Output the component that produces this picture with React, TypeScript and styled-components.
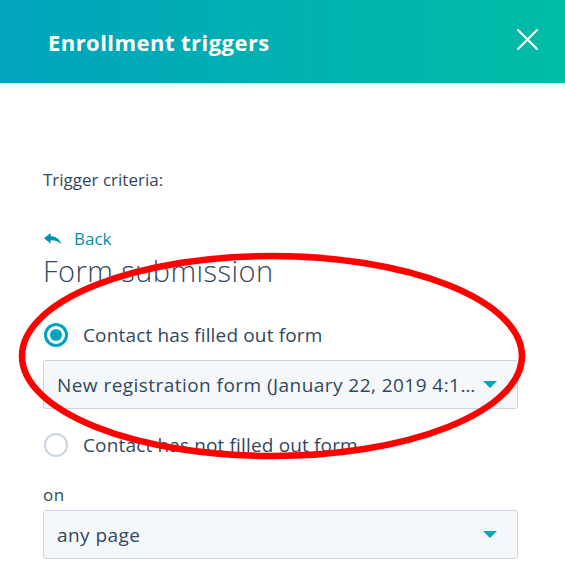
import { createGlobalStyle } from "styled-components"
import styled from "styled-components"

const GlobalStyle = createGlobalStyle`
  html, body {
    margin: 0;
    padding: 0;
    background: #ffffff;
  }
  body {
    font-family: "Open Sans", Lato, sans-serif;
    color: #33475b;
  }
`

const Panel = styled.div`
  position: relative;
  width: 565px;
  height: 588px;
  overflow: hidden;
  background: #ffffff;
`

const Header = styled.header`
  display: flex;
  align-items: center;
  justify-content: space-between;
  height: 83px;
  padding: 0 27px 0 48px;
  box-sizing: border-box;
  background: linear-gradient(90deg, #00a4bd 0%, #00bda5 100%);
`

const Title = styled.h2`
  margin: 0;
  font-size: 22px;
  font-weight: 700;
  letter-spacing: 0.45px;
  color: #ffffff;
`

const CloseButton = styled.button`
  display: flex;
  align-items: center;
  justify-content: center;
  width: 22px;
  height: 22px;
  padding: 0;
  margin-top: -4px;
  border: none;
  background: none;
  cursor: pointer;
`

const Body = styled.div`
  display: flex;
  flex-direction: column;
  padding: 85px 47px 0 43px;
`

const CriteriaLabel = styled.div`
  font-size: 17px;
  line-height: 24px;
  color: #33475b;
`

const BackLink = styled.a`
  display: flex;
  align-items: center;
  gap: 12px;
  margin-top: 35px;
  padding-left: 1px;
  font-size: 17px;
  line-height: 24px;
  color: #0091ae;
  text-decoration: none;
  cursor: pointer;
`

const Heading = styled.h3`
  margin: 2px 0 0;
  font-size: 29px;
  line-height: 36px;
  font-weight: 300;
  letter-spacing: 0.45px;
  color: #33475b;
`

const RadioRow = styled.label<{ $gap: number }>`
  display: flex;
  align-items: center;
  gap: 15px;
  height: 24px;
  margin-top: ${(p) => p.$gap}px;
  font-size: 19px;
  letter-spacing: 0.15px;
  color: #33475b;
  cursor: pointer;
`

const RadioCircle = styled.span<{ $checked?: boolean }>`
  position: relative;
  width: 24px;
  height: 24px;
  margin-left: 1px;
  box-sizing: border-box;
  border-radius: 50%;
  border: ${(p) => (p.$checked ? "3px solid #00a4bd" : "2.5px solid #cbd6e2")};
  background: #ffffff;
  flex-shrink: 0;

  &::after {
    content: "";
    display: ${(p) => (p.$checked ? "block" : "none")};
    position: absolute;
    inset: 3px;
    border-radius: 50%;
    background: #00a4bd;
  }
`

const Select = styled.div<{ $gap: number }>`
  display: flex;
  align-items: center;
  justify-content: space-between;
  height: 49px;
  margin-top: ${(p) => p.$gap}px;
  padding: 0 20px 0 13px;
  box-sizing: border-box;
  border: 1px solid #cbd6e2;
  border-radius: 3px;
  background: #f5f8fa;
  font-size: 19px;
  letter-spacing: 0.45px;
  color: #33475b;
  cursor: pointer;
`

const SelectValue = styled.span`
  white-space: nowrap;
  padding-right: 7px;
`

const Caret = styled.span`
  width: 0;
  height: 0;
  flex-shrink: 0;
  border-left: 7.5px solid transparent;
  border-right: 7.5px solid transparent;
  border-top: 7px solid #00a4bd;
`

const FieldLabel = styled.div`
  margin-top: 28px;
  font-size: 17px;
  line-height: 20px;
  letter-spacing: 0.4px;
  color: #33475b;
`

const Annotation = styled.svg`
  position: absolute;
  left: 0;
  top: 0;
  pointer-events: none;
`

function ReplyArrow() {
  return (
    <svg width="18" height="12" viewBox="0 0 18 12">
      <path
        d="M0 5.2 L6.6 0 L6.6 3.2 C11.6 3.2 15.6 5.6 17.4 11.2 C15 8.4 11.6 7.2 6.6 7.2 L6.6 10.4 Z"
        fill="#0091ae"
      />
    </svg>
  )
}

export default function App() {
  return (
    <>
      <GlobalStyle />
      <Panel>
        <Header>
          <Title>Enrollment triggers</Title>
          <CloseButton aria-label="Close">
            <svg width="21" height="21" viewBox="0 0 21 21">
              <path d="M1 1 L20 20 M20 1 L1 20" stroke="#ffffff" strokeWidth="2.2" strokeLinecap="round" />
            </svg>
          </CloseButton>
        </Header>
        <Body>
          <CriteriaLabel>Trigger criteria:</CriteriaLabel>
          <BackLink>
            <ReplyArrow />
            Back
          </BackLink>
          <Heading>Form submission</Heading>
          <RadioRow $gap={34}>
            <RadioCircle $checked />
            Contact has filled out form
          </RadioRow>
          <Select $gap={13}>
            <SelectValue>New registration form (January 22, 2019 4:1…</SelectValue>
            <Caret />
          </Select>
          <RadioRow $gap={24}>
            <RadioCircle />
            Contact has not filled out form
          </RadioRow>
          <FieldLabel>on</FieldLabel>
          <Select $gap={5}>
            <SelectValue>any page</SelectValue>
            <Caret />
          </Select>
        </Body>
        <Annotation width="565" height="588" viewBox="0 0 565 588">
          <ellipse cx="272" cy="356" rx="250" ry="100" fill="none" stroke="#ff0000" strokeWidth="6.5" />
        </Annotation>
      </Panel>
    </>
  )
}
